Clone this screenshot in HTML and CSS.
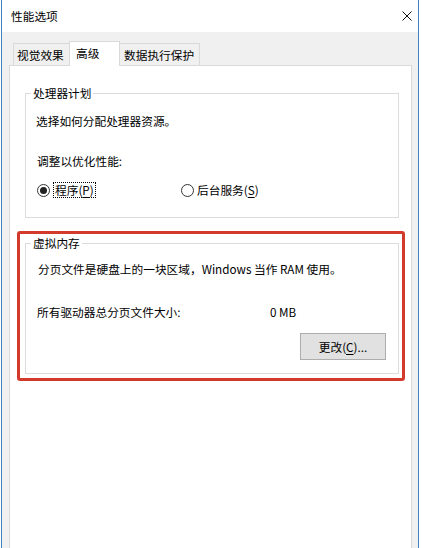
FILE: index.html
```html
<!DOCTYPE html>
<html lang="zh-CN">
<head>
<meta charset="utf-8">
<title>性能选项</title>
<link rel="stylesheet" href="styles.css">
</head>
<body>
<div class="window">
  <div class="titlebar">
    <span class="title">性能选项</span>
    <svg class="close" width="10" height="10" viewBox="0 0 10 10" aria-hidden="true">
      <path d="M0.5 0.5 L9.5 9.5 M9.5 0.5 L0.5 9.5" stroke="#111" stroke-width="1" fill="none"/>
    </svg>
  </div>
  <div class="client">
    <div class="tabs">
      <div class="tab t1">视觉效果</div>
      <div class="tab active">高级</div>
      <div class="tab t3">数据执行保护</div>
    </div>
    <div class="panel">
      <fieldset class="group g1">
        <legend>处理器计划</legend>
        <p class="desc">选择如何分配处理器资源。</p>
        <p class="adjust">调整以优化性能:</p>
        <div class="radios">
          <label class="radio first"><span class="dot checked"></span><span class="focus">程序(<u>P</u>)</span></label>
          <label class="radio"><span class="dot"></span><span class="rtext">后台服务(<u>S</u>)</span></label>
        </div>
      </fieldset>
      <div class="highlight">
        <fieldset class="group g2">
          <legend>虚拟内存</legend>
          <p class="vdesc">分页文件是硬盘上的一块区域，Windows 当作 RAM 使用。</p>
          <div class="sizerow"><span class="sizelabel">所有驱动器总分页文件大小:</span><span class="sizeval">0 MB</span></div>
          <div class="btnrow"><button class="btn" type="button">更改(<u>C</u>)...</button></div>
        </fieldset>
      </div>
    </div>
  </div>
</div>
</body>
</html>
```
FILE: styles.css
```css
html, body {
  margin: 0;
  padding: 0;
  background: #ffffff;
  overflow: hidden;
}
body {
  width: 422px;
  height: 548px;
  font-family: "Noto Sans CJK SC", "Noto Sans", sans-serif;
  font-size: 11.7px;
  color: #000;
  line-height: 16px;
}
.window {
  margin-left: 1px;
  width: 416px;
  height: 548px;
  border-left: 1px solid #3f82c2;
  border-right: 1px solid #3f82c2;
  background: #f0f0f0;
  display: flex;
  flex-direction: column;
}
.titlebar {
  height: 32px;
  flex: none;
  background: #ffffff;
  display: flex;
  align-items: center;
  justify-content: space-between;
  padding: 0 6px 0 9px;
}
.title {
  font-size: 11.7px;
  line-height: 32px;
}
.close {
  display: block;
}
.client {
  flex: 1;
  display: flex;
  flex-direction: column;
  padding: 9px 6px 0 7px;
  min-height: 0;
}
.tabs {
  display: flex;
  align-items: flex-end;
  margin-left: 4px;
  margin-bottom: -1px;
  position: relative;
  z-index: 1;
}
.tab {
  box-sizing: border-box;
  border: 1px solid #d9d9d9;
  border-bottom: none;
  background: #f0f0f0;
  height: 22px;
  padding-top: 3px;
  margin-bottom: 1px;
  white-space: nowrap;
}
.t1 {
  width: 57px;
  padding-left: 3px;
}
.active {
  width: 51px;
  height: 25px;
  margin-bottom: 0;
  margin-left: -1px;
  padding-top: 3px;
  padding-left: 6px;
  background: #ffffff;
}
.t3 {
  width: 81px;
  margin-left: -1px;
  padding-left: 4px;
}
.panel {
  flex: 1;
  border: 1px solid #d9d9d9;
  border-bottom: none;
  background: #ffffff;
  padding: 19px 3px 0 15px;
}
.group {
  margin: 0;
  border: 1px solid #dcdcdc;
  padding: 0;
  min-width: 0;
  box-sizing: border-box;
  width: 374px;
}
.group legend {
  margin-left: 5px;
  padding: 0 2px;
  line-height: 16px;
}
.g1 {
  padding: 0 0 19px 0;
}
.desc {
  margin: 12px 0 0 10px;
}
.adjust {
  margin: 24px 0 0 11px;
}
.radios {
  display: flex;
  align-items: center;
  margin: 13px 0 0 11px;
  height: 16px;
}
.radio {
  display: flex;
  align-items: center;
}
.radio.first {
  width: 144px;
}
.dot {
  box-sizing: border-box;
  width: 13px;
  height: 13px;
  border: 1px solid #333;
  border-radius: 50%;
  background: #fff;
  display: flex;
  align-items: center;
  justify-content: center;
}
.dot.checked::after {
  content: "";
  width: 7px;
  height: 7px;
  border-radius: 50%;
  background: #222;
}
.focus {
  margin-left: 3px;
  border: 1px dotted #000;
  padding: 0 1px;
  line-height: 14px;
}
.rtext {
  margin-left: 3px;
}
.highlight {
  margin: 13px 3px 0 -8px;
  border: 3px solid #d23b2b;
  border-radius: 3px;
  padding: 1px 6px 4px 5px;
}
.g2 {
  padding: 0 0 13px 0;
}
.vdesc {
  margin: 10px 0 0 12px;
  white-space: nowrap;
}
.sizerow {
  display: flex;
  margin: 27px 0 0 11px;
}
.sizelabel {
  width: 233px;
}
.btnrow {
  display: flex;
  justify-content: flex-end;
  margin: 13px 12px 0 0;
}
.btn {
  width: 86px;
  height: 27px;
  border: 1px solid #adadad;
  background: #e1e1e1;
  font-family: inherit;
  font-size: 11.7px;
  color: #000;
  padding: 0;
}
u {
  text-underline-offset: 2px;
}
```
